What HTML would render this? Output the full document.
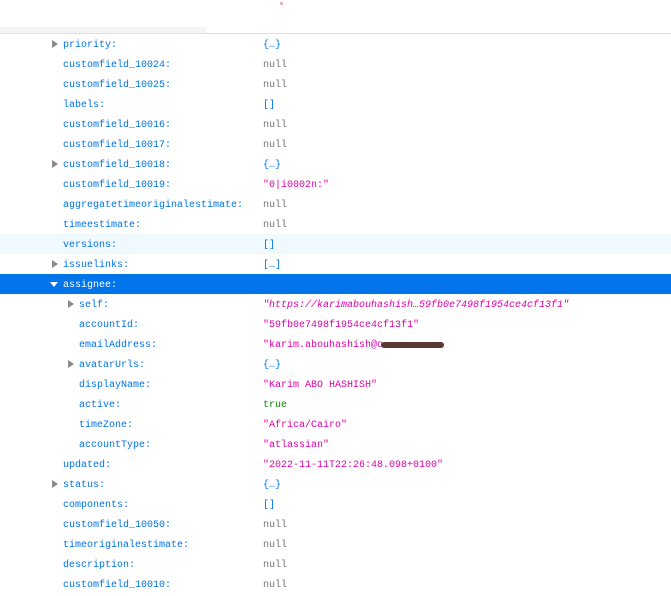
<!DOCTYPE html><html><head><style>
body{margin:0;width:671px;height:587px;overflow:hidden;background:#fff;font-family:"Liberation Mono",monospace;font-size:10px;position:relative}
.strip{position:absolute;left:0;top:27px;width:206px;height:6px;background:#f5f5f5}
.line{position:absolute;left:0;top:33px;width:671px;height:1px;background:#e0e0e0}
.dot{position:absolute;left:280px;top:2px;width:3px;height:3px;background:#f4a0a0;border-radius:50%}
.r{position:absolute;left:0;width:671px;height:20px;line-height:20px;white-space:nowrap}
.k{position:absolute;top:2px;color:#0074e8}
.v{position:absolute;top:2px;left:263px}
.n{color:#737373}.s{color:#dd00a9}.b{color:#058b00}.o{color:#0074e8}
.t{position:absolute;top:6px;width:0;height:0;border-top:4px solid transparent;border-bottom:4px solid transparent;border-left:6px solid #8a8a8a}
.sel{background:#0074e8}.sel .k{color:#fff}
.sel .t{border-left:4px solid transparent;border-right:4px solid transparent;border-top:5px solid #fff;border-bottom:0;top:8px}
.hov{background:#f0f9fe}
</style></head><body>
<div class="dot"></div><div class="strip"></div><div class="line"></div>
<div class="r" style="top:34px"><i class="t" style="left:52px"></i><span class="k" style="left:63px">priority:</span><span class="v o">{…}</span></div>
<div class="r" style="top:54px"><span class="k" style="left:63px">customfield_10024:</span><span class="v n">null</span></div>
<div class="r" style="top:74px"><span class="k" style="left:63px">customfield_10025:</span><span class="v n">null</span></div>
<div class="r" style="top:94px"><span class="k" style="left:63px">labels:</span><span class="v o">[]</span></div>
<div class="r" style="top:114px"><span class="k" style="left:63px">customfield_10016:</span><span class="v n">null</span></div>
<div class="r" style="top:134px"><span class="k" style="left:63px">customfield_10017:</span><span class="v n">null</span></div>
<div class="r" style="top:154px"><i class="t" style="left:52px"></i><span class="k" style="left:63px">customfield_10018:</span><span class="v o">{…}</span></div>
<div class="r" style="top:174px"><span class="k" style="left:63px">customfield_10019:</span><span class="v s">"0|i0002n:"</span></div>
<div class="r" style="top:194px"><span class="k" style="left:63px">aggregatetimeoriginalestimate:</span><span class="v n">null</span></div>
<div class="r" style="top:214px"><span class="k" style="left:63px">timeestimate:</span><span class="v n">null</span></div>
<div class="r hov" style="top:234px"><span class="k" style="left:63px">versions:</span><span class="v o">[]</span></div>
<div class="r" style="top:254px"><i class="t" style="left:52px"></i><span class="k" style="left:63px">issuelinks:</span><span class="v o">[…]</span></div>
<div class="r sel" style="top:274px"><i class="t" style="left:50px"></i><span class="k" style="left:63px">assignee:</span></div>
<div class="r" style="top:294px"><i class="t" style="left:68px"></i><span class="k" style="left:79px">self:</span><span class="v s" style="font-style:italic">"https://karimabouhashish…59fb0e7498f1954ce4cf13f1"</span></div>
<div class="r" style="top:314px"><span class="k" style="left:79px">accountId:</span><span class="v s">"59fb0e7498f1954ce4cf13f1"</span></div>
<div class="r" style="top:334px"><span class="k" style="left:79px">emailAddress:</span><span class="v s">"karim.abouhashish@o</span><span style="position:absolute;left:381px;top:8px;width:63px;height:6px;background:#5a3a30;border-radius:3px"></span></div>
<div class="r" style="top:354px"><i class="t" style="left:68px"></i><span class="k" style="left:79px">avatarUrls:</span><span class="v o">{…}</span></div>
<div class="r" style="top:374px"><span class="k" style="left:79px">displayName:</span><span class="v s">"Karim ABO HASHISH"</span></div>
<div class="r" style="top:394px"><span class="k" style="left:79px">active:</span><span class="v b">true</span></div>
<div class="r" style="top:414px"><span class="k" style="left:79px">timeZone:</span><span class="v s">"Africa/Cairo"</span></div>
<div class="r" style="top:434px"><span class="k" style="left:79px">accountType:</span><span class="v s">"atlassian"</span></div>
<div class="r" style="top:454px"><span class="k" style="left:63px">updated:</span><span class="v s">"2022-11-11T22:26:48.098+0100"</span></div>
<div class="r" style="top:474px"><i class="t" style="left:52px"></i><span class="k" style="left:63px">status:</span><span class="v o">{…}</span></div>
<div class="r" style="top:494px"><span class="k" style="left:63px">components:</span><span class="v o">[]</span></div>
<div class="r" style="top:514px"><span class="k" style="left:63px">customfield_10050:</span><span class="v n">null</span></div>
<div class="r" style="top:534px"><span class="k" style="left:63px">timeoriginalestimate:</span><span class="v n">null</span></div>
<div class="r" style="top:554px"><span class="k" style="left:63px">description:</span><span class="v n">null</span></div>
<div class="r" style="top:574px"><span class="k" style="left:63px">customfield_10010:</span><span class="v n">null</span></div>
</body></html>
